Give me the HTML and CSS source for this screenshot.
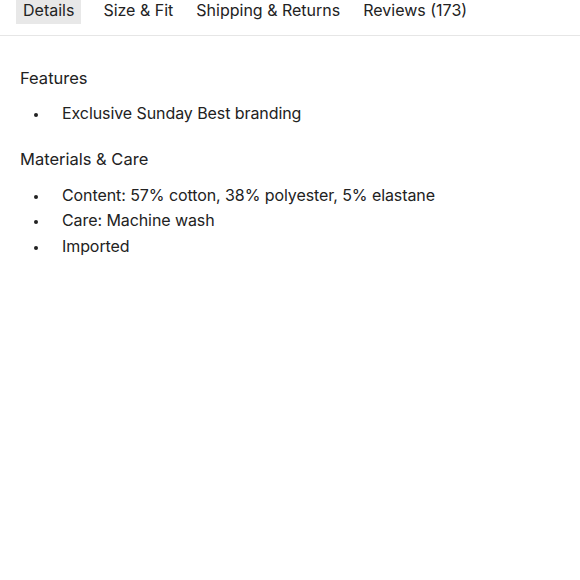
FILE: index.html
```html
<!DOCTYPE html>
<html>
<head>
<meta charset="utf-8">
<link rel="stylesheet" href="styles.css">
</head>
<body>
<nav class="tabs">
  <span class="tab active">Details</span>
  <span class="tab">Size &amp; Fit</span>
  <span class="tab">Shipping &amp; Returns</span>
  <span class="tab">Reviews (173)</span>
</nav>
<section class="content">
  <h3 class="heading">Features</h3>
  <ul class="list">
    <li>Exclusive Sunday Best branding</li>
  </ul>
  <h3 class="heading">Materials &amp; Care</h3>
  <ul class="list">
    <li>Content: 57% cotton, 38% polyester, 5% elastane</li>
    <li>Care: Machine wash</li>
    <li>Imported</li>
  </ul>
</section>
</body>
</html>
```
FILE: styles.css
```css
html, body {
  margin: 0;
  padding: 0;
  background: #fff;
}
body {
  font-family: "Inter", "Noto Sans", sans-serif;
  color: #222;
  font-size: 16px;
}
.tabs {
  display: flex;
  gap: 11px;
  padding: 0 16px 11px;
  border-bottom: 1px solid #e6e6e6;
}
.tab {
  padding: 0 6px;
  height: 24px;
  line-height: 20px;
  font-size: 16px;
  color: #222;
}
.tab.active {
  padding: 0 7px;
  margin-right: 5px;
  background: #e8e8e8;
}
.content {
  padding: 0 20px;
}
.heading {
  margin: 0;
  font-weight: 400;
  font-size: 16.5px;
  line-height: 24px;
  padding-top: 30px;
}
.list {
  list-style: none;
  margin: 0;
  padding: 11px 0 0;
}
.list:last-child {
  padding-top: 12px;
}
.list li {
  position: relative;
  padding-left: 42px;
  line-height: 25.5px;
  font-size: 16px;
  letter-spacing: -0.08px;
}
.list li::before {
  content: "";
  position: absolute;
  left: 14px;
  top: 12px;
  width: 4px;
  height: 4px;
  border-radius: 50%;
  background: #222;
}
.list + .heading {
  padding-top: 20px;
}
```
